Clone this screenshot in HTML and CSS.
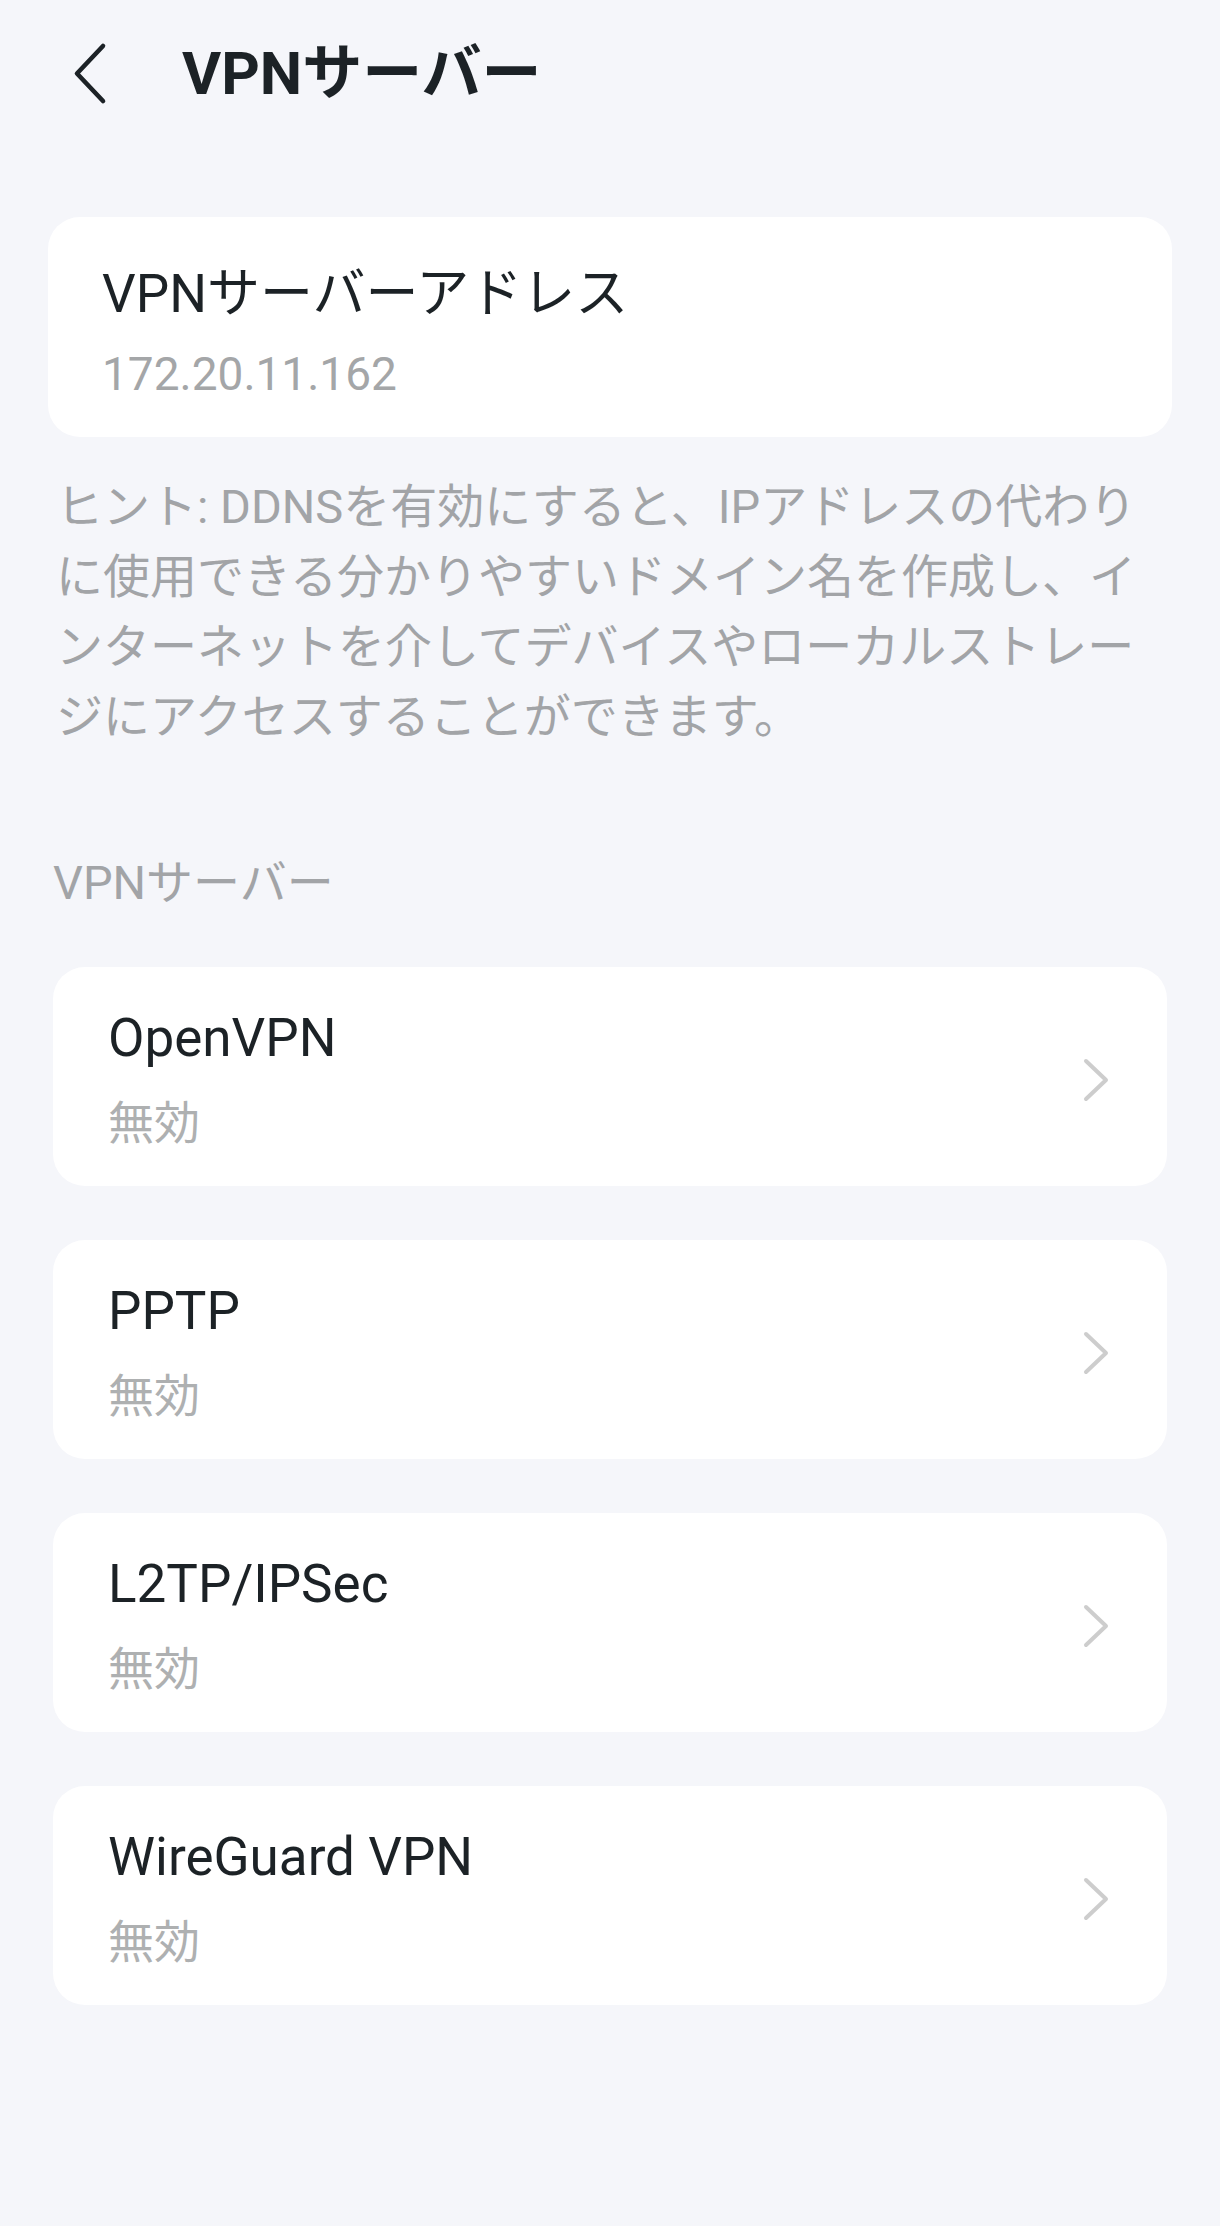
FILE: index.html
```html
<!DOCTYPE html>
<html lang="ja">
<head>
<meta charset="utf-8">
<title>VPNサーバー</title>
<link rel="stylesheet" href="styles.css">
</head>
<body>
<div class="page">
  <header class="topbar">
    <button class="back" aria-label="戻る">
      <svg width="34" height="64" viewBox="0 0 34 64"><path d="M30 4 L4 31.5 L30 59" fill="none" stroke="#1c2226" stroke-width="4.6" stroke-linecap="round" stroke-linejoin="round"/></svg>
    </button>
    <h1 class="title">VPNサーバー</h1>
  </header>

  <section class="card address">
    <div class="row-title">VPNサーバーアドレス</div>
    <div class="row-sub ip">172.20.11.162</div>
  </section>

  <p class="hint">ヒント: DDNSを有効にすると、IPアドレスの代わりに使用できる分かりやすいドメイン名を作成し、インターネットを介してデバイスやローカルストレージにアクセスすることができます。</p>

  <h2 class="section-label">VPNサーバー</h2>

  <ul class="vpn-list">
    <li class="card vpn-item">
      <div class="item-text">
        <div class="row-title">OpenVPN</div>
        <div class="row-sub">無効</div>
      </div>
      <svg class="chev" width="26" height="44" viewBox="0 0 26 44"><path d="M3 3 L23 22 L3 41" fill="none" stroke="#cdcdcd" stroke-width="4" stroke-linecap="round" stroke-linejoin="round"/></svg>
    </li>
    <li class="card vpn-item">
      <div class="item-text">
        <div class="row-title">PPTP</div>
        <div class="row-sub">無効</div>
      </div>
      <svg class="chev" width="26" height="44" viewBox="0 0 26 44"><path d="M3 3 L23 22 L3 41" fill="none" stroke="#cdcdcd" stroke-width="4" stroke-linecap="round" stroke-linejoin="round"/></svg>
    </li>
    <li class="card vpn-item">
      <div class="item-text">
        <div class="row-title">L2TP/IPSec</div>
        <div class="row-sub">無効</div>
      </div>
      <svg class="chev" width="26" height="44" viewBox="0 0 26 44"><path d="M3 3 L23 22 L3 41" fill="none" stroke="#cdcdcd" stroke-width="4" stroke-linecap="round" stroke-linejoin="round"/></svg>
    </li>
    <li class="card vpn-item">
      <div class="item-text">
        <div class="row-title">WireGuard VPN</div>
        <div class="row-sub">無効</div>
      </div>
      <svg class="chev" width="26" height="44" viewBox="0 0 26 44"><path d="M3 3 L23 22 L3 41" fill="none" stroke="#cdcdcd" stroke-width="4" stroke-linecap="round" stroke-linejoin="round"/></svg>
    </li>
  </ul>
</div>
</body>
</html>
```

FILE: styles.css
```css
* { box-sizing: border-box; }

html, body {
  margin: 0;
  padding: 0;
  background: #f5f6fa;
}

body {
  font-family: Roboto, "Noto Sans CJK JP", sans-serif;
  color: #1c2226;
  min-height: 2226px;
}

.page {
  display: flex;
  flex-direction: column;
}

.topbar {
  height: 148px;
  display: flex;
  align-items: center;
  padding-left: 73px;
}

.back {
  border: 0;
  background: none;
  padding: 0;
  margin: 0;
  width: 34px;
  height: 64px;
  display: flex;
}

.title {
  margin: 0 0 0 75px;
  font-size: 60px;
  font-weight: 700;
  line-height: 70px;
  color: #1c2226;
}

.card {
  background: #ffffff;
  border-radius: 32px;
}

.address {
  margin: 69px 48px 0;
  padding: 47px 54px 35px;
  display: flex;
  flex-direction: column;
  gap: 22px;
}

.row-title {
  font-size: 53px;
  line-height: 60px;
  color: #1c2226;
}

.row-sub {
  font-size: 46px;
  line-height: 56px;
  color: #aeb0b1;
}

.ip {
  color: #a4a6a8;
}

.hint {
  margin: 35px 0 0;
  padding: 0 73px 0 56px;
  font-size: 47px;
  line-height: 70px;
  color: #a2a4a7;
}

.section-label {
  margin: 101px 0 0;
  padding-left: 53px;
  font-size: 47px;
  font-weight: 400;
  line-height: 60px;
  color: #a2a4a7;
}

.vpn-list {
  list-style: none;
  margin: 54px 53px 0;
  padding: 0;
  display: flex;
  flex-direction: column;
  gap: 54px;
}

.vpn-item {
  display: flex;
  align-items: center;
  padding: 41px 58px 35px 55px;
}

.item-text {
  flex: 1;
  display: flex;
  flex-direction: column;
  gap: 27px;
}

.chev {
  flex: none;
  display: block;
}
```
